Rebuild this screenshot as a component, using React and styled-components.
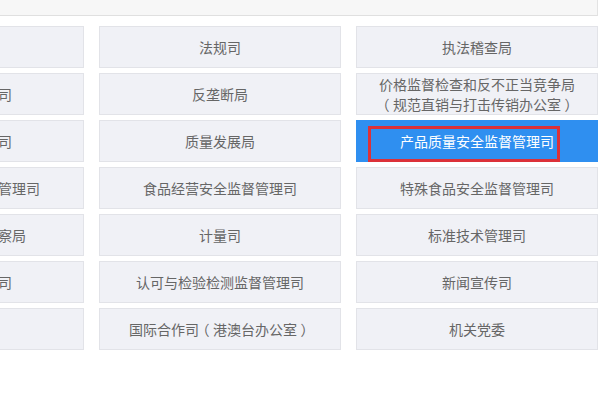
import React from 'react'
import styled, { createGlobalStyle } from 'styled-components';

const GlobalStyle = createGlobalStyle`
  html, body {
    margin: 0;
    padding: 0;
    background: #ffffff;
    overflow: hidden;
  }
  body {
    font-family: "Noto Sans CJK SC", "Noto Sans", sans-serif;
  }
`

const departments = [
    "综合规划司", "法规司", "执法稽查局",
    "竞争政策协调司", "反垄断局", "价格监督检查和反不正当竞争局\n（规范直销与打击传销办公室）",
    "广告监督管理司", "质量发展局", "产品质量安全监督管理司",
    "食品生产安全监督管理司", "食品经营安全监督管理司", "特殊食品安全监督管理司",
    "食品安全抽检监察局", "计量司", "标准技术管理司",
    "认证监督管理司", "认可与检验检测监督管理司", "新闻宣传司",
    "人事司", "国际合作司（港澳台办公室）", "机关党委",
];

const ACTIVE = "产品质量安全监督管理司";

// fullwidth brackets: half-width glyph centred in a full em box
const renderLine = (line) =>
    line.split(/([（）])/).filter(Boolean).map((part, i) =>
        part === "（" || part === "）" ? <Paren key={i}>{part}</Paren> : part
    );

export default function App() {
    return (
        <>
            <GlobalStyle />
            <Page>
                <SearchBar />
                <DeptGrid>
                    {departments.map((name, index) => {
                        const active = name === ACTIVE;
                        return (
                            <DeptItem key={index} $active={active}>
                                {name.split("\n").map((line, i) => (
                                    <Line key={i}>{renderLine(line)}</Line>
                                ))}
                                {active ? <Highlight /> : null}
                            </DeptItem>
                        )
                    })}
                </DeptGrid>
            </Page>
        </>
    )
}

const Page = styled.div`
  width: 756px;
  margin-left: -158px;
`

const SearchBar = styled.div`
  box-sizing: border-box;
  height: 16px;
  background: #f7f7f7;
  border-right: 1px solid #e3e3e3;
  border-bottom: 1px solid #e0e0e0;
`

const DeptGrid = styled.div`
  display: grid;
  grid-template-columns: repeat(3, 242px);
  column-gap: 15px;
  row-gap: 5px;
  margin-top: 10px;
`

const DeptItem = styled.div`
  position: relative;
  box-sizing: border-box;
  height: 42px;
  display: flex;
  flex-direction: column;
  align-items: center;
  justify-content: center;
  background: ${p => p.$active ? "#2f8ff0" : "#f0f1f6"};
  border: 1px solid ${p => p.$active ? "#2f8ff0" : "#e2e3e8"};
  color: ${p => p.$active ? "#ffffff" : "#666666"};
  font-size: 14px;
  line-height: 20px;
  white-space: nowrap;
`

const Line = styled.span`
  display: block;
`

const Paren = styled.span`
  display: inline-block;
  width: 1em;
  text-align: center;
  font-feature-settings: "halt" 1;
`

const Highlight = styled.span`
  position: absolute;
  left: 11px;
  top: 5px;
  width: 192px;
  height: 36px;
  box-sizing: border-box;
  border: 3px solid #dc3139;
  pointer-events: none;
`
